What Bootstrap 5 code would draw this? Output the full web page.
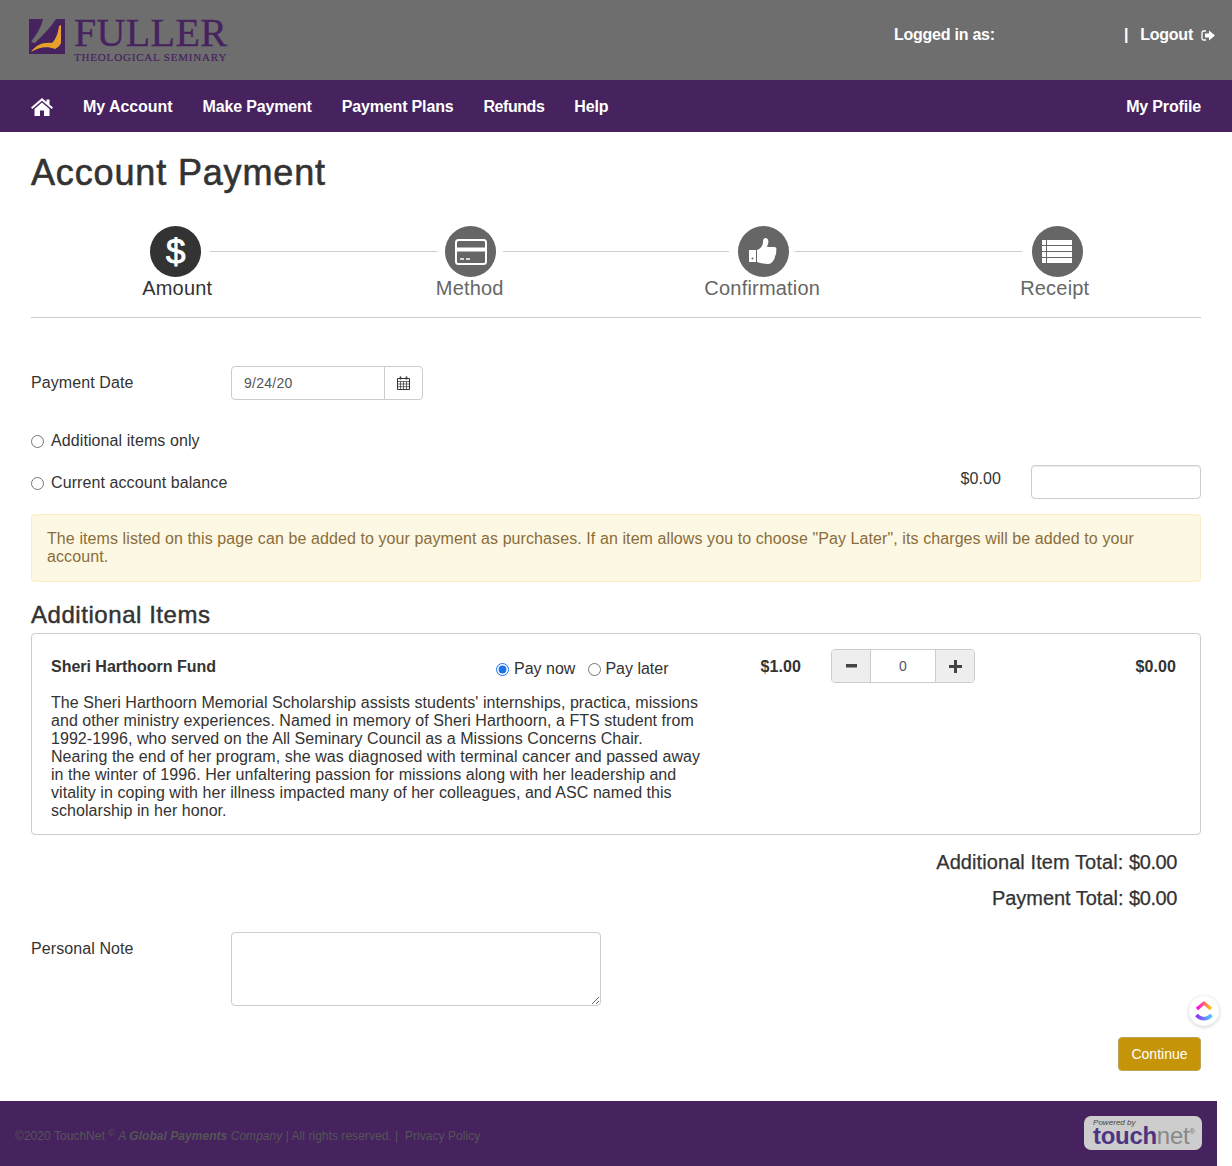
<!DOCTYPE html>
<html lang="en"><head><meta charset="utf-8"><title>Account Payment</title>
<link rel="stylesheet" href="https://cdn.jsdelivr.net/npm/bootstrap@5.3.0/dist/css/bootstrap.min.css">
<style>
html,body{height:1166px;overflow:hidden}
body{font-family:"Liberation Sans",Arial,sans-serif;font-size:16px;line-height:18px;letter-spacing:.09px;color:#333;background:#fff;position:relative}
.top-bar{height:80px;background:#6e6e6e;padding:0 17px 0 29px}
.logo-mark{width:36px;height:35px;margin-top:19px}
.logo-words{margin-left:9px;margin-top:14px;color:#46235f;font-family:"Liberation Serif",serif;letter-spacing:0}
.logo-big{font-size:40px;line-height:37px;letter-spacing:.35px;white-space:nowrap;-webkit-text-stroke:.3px #46235f}
.logo-small{font-size:11px;line-height:11px;letter-spacing:.82px;white-space:nowrap;margin-top:1px;-webkit-text-stroke:.2px #46235f}
.top-links{color:#fff;font-weight:700;padding-top:26px;letter-spacing:-.24px}
.who{width:230px}
.main-nav{height:52px;background:#46235f;padding:1px 31px 0}
.main-nav a{color:#fff;font-weight:700;text-decoration:none;letter-spacing:-.16px;white-space:nowrap}
.nav-items{gap:30px}
.main-nav a.nav-wide{letter-spacing:-.06px}
.main-nav a.nav-tight{letter-spacing:-.45px}
.page-wrap{padding:0 31px}
.page-title{font-size:36px;line-height:40px;font-weight:500;color:#333;margin:21px 0 0;padding:0;letter-spacing:.85px;-webkit-text-stroke:.6px #333}
.steps{margin-top:33px;padding-bottom:18px;border-bottom:1px solid #ccc;display:grid;grid-template-columns:repeat(4,1fr)}
.step-cell{text-align:center;position:relative;color:#666;font-size:20px;line-height:22px;letter-spacing:.2px}
.step-cell.on{color:#333}
.step-cell:not(:last-child)::after{content:"";position:absolute;top:25px;left:calc(50% + 33px);width:calc(100% - 66px);height:1px;background:#ccc}
.step-dot{width:51px;height:51px;border-radius:50%;background:#666;display:flex;align-items:center;justify-content:center;margin:0 auto;transform:translateX(1px)}
.on .step-dot{background:#333;margin-left:calc(50% - 28px)}
.step-last .step-dot{margin-left:calc(50% - 24px)}
.dollar{color:#fff;font-size:35px;font-weight:400;line-height:1;-webkit-text-stroke:.9px #fff;letter-spacing:0}
.field-label{width:200px;flex:none}
.date-row{margin-top:48px;height:34px}
.date-group{width:192px}
.date-group .form-control{height:34px;font-size:14px;color:#555;padding:6px 12px;border-color:#ccc;border-radius:4px 0 0 4px;font-family:inherit;letter-spacing:.25px}
.date-group .input-group-text{background:#fff;border-color:#ccc;width:39px;padding:0;justify-content:center;border-radius:0 4px 4px 0}
.radio-line{display:flex;align-items:center;gap:7px;margin:0}
.round-input{appearance:auto;width:13px;height:13px;margin:0;flex:none;accent-color:#1a73e8}
.only-row{margin-top:32px}
.bal-row{margin-top:15px;height:36px;align-items:flex-start}
.bal-row .radio-line{margin-top:9px}
.bal-amt{margin-left:auto;margin-top:5px;margin-right:30px}
.bal-input{width:170px;height:34px;border:1px solid #ccc;border-radius:4px;box-shadow:inset 0 1px 1px rgba(0,0,0,.075)}
.note-alert{margin:13px 0 0;padding:15px;height:68px;background:#fcf8e3;border:1px solid #faebcc;border-radius:4px;color:#8a6d3b;line-height:18px}
.sec-title{font-size:24px;line-height:26px;font-weight:500;margin:20px 0 5px;color:#333;letter-spacing:.55px;-webkit-text-stroke:.45px #333}
.item-box{height:202px;border:1px solid #ccc;border-radius:4px;padding:15px 24px 0 19px}
.item-head{height:36px;font-size:16px}
.item-name{width:445px;font-weight:700;padding-top:9px;letter-spacing:-.02px}
.pay-choice{width:264px;padding-top:8px;gap:13px;align-items:flex-start;letter-spacing:0}
.pay-choice .radio-line{gap:5px;height:24px}
.pay-choice .radio-line + .radio-line{gap:4px}
.item-price{width:41px;font-weight:700;padding-top:9px;text-align:right;margin-right:0}
.qty-group{width:144px;height:34px;margin-left:30px;border:1px solid #ccc;border-radius:4px;overflow:hidden}
.qty-btn{width:38px;background:#eee;display:flex;align-items:center;justify-content:center;flex:none}
.qty-val{flex:1;border-left:1px solid #ccc;border-right:1px solid #ccc;text-align:center;font-size:14px;line-height:32px;color:#555}
.item-sum{margin-left:auto;font-weight:700;padding-top:9px}
.item-desc{width:654px;margin:9px 0 0;letter-spacing:.05px}
.sum-line{text-align:right;font-size:20px;line-height:24px;font-weight:500;padding-right:24px;margin:0;letter-spacing:.08px;-webkit-text-stroke:.25px #333}
.sum-line span{letter-spacing:-.4px}
.sum-a{margin-top:15px}
.sum-b{margin-top:12px;letter-spacing:-.03px}
.note-row{margin-top:22px}
.note-row .field-label{padding-top:8px}
.note-area{width:370px;height:74px;border:1px solid #ccc;border-radius:4px}
.go-row{margin-top:31px}
.go-btn{background:#c69408;border:1px solid #bda35c;color:#fff;font-size:14px;line-height:20px;padding:6px 0;border-radius:4px;width:83px;height:34px}
.foot-bar{position:absolute;left:0;top:1101px;width:1217px;height:65px;background:#46235f;padding:0 15px;color:#555;font-size:12px;letter-spacing:.04px}
.foot-bar a{color:#555;text-decoration:none}
.foot-bar sup{font-size:9px}
.foot-text{padding-top:26px}
.tn-badge{width:118px;height:34px;margin-top:15px;background:#cdcdcd;border-radius:7px;padding:3px 9px;line-height:1}
.tn-pow{font-size:8px;font-style:italic;color:#444;line-height:8px}
.tn-word{font-size:24px;line-height:20px;font-weight:700;color:#4e3582;letter-spacing:-.3px;margin-top:-1px;white-space:nowrap}
.tn-word span{font-weight:400;color:#888}
.tn-word sup{font-size:8px;font-weight:400;color:#777;top:-1.2em;vertical-align:baseline;position:relative}
.clk-float{position:absolute;left:1189px;top:996px;width:30px;height:30px;border-radius:50%;background:#fff;box-shadow:0 1px 4px rgba(0,0,0,.2);display:flex;align-items:center;justify-content:center}
</style></head>
<body>
<header class="top-bar d-flex justify-content-between">
  <div class="d-flex">
    <svg class="logo-mark" viewBox="0 0 36 35" aria-hidden="true"><path d="M0 0H36V35H0Z" fill="#46235f"/><path d="M14 0H27C22 8 14 16 6 24L2 23C7 16 12 9 14 0Z" fill="#6e6e6e"/><path d="M2 33C7 26 14 23 23 24C27 20 29 14 30 7L32 6V24C31 27 28 29 26 30C18 27 10 28 2 33Z" fill="#e6a02c"/></svg>
    <div class="logo-words"><div class="logo-big">FULLER</div><div class="logo-small">THEOLOGICAL SEMINARY</div></div>
  </div>
  <div class="top-links d-flex">
    <div class="who">Logged in as:</div>
    <div class="d-flex align-items-start"><span>|</span><span class="ms-2 ps-1">Logout</span>
      <svg class="ms-2 mt-1" width="14" height="11" viewBox="0 0 14 11" aria-hidden="true"><path d="M5 1H2.500A1.500 1.500 0 0 0 1 2.500V8.500A1.500 1.500 0 0 0 2.500 10H5" fill="none" stroke="#fff" stroke-width="1.300"/><path d="M8 0.500L14 5.500L8 10.500V7.500H4V3.500H8Z" fill="#fff"/></svg>
    </div>
  </div>
</header>
<nav class="main-nav d-flex align-items-center justify-content-between">
  <div class="d-flex align-items-center nav-items">
    <a href="#" aria-label="Home"><svg class="d-block" width="22" height="18" viewBox="0 0 22 18"><path d="M11 0L0 9.500L1.300 11L11 2.800L20.700 11L22 9.500L18.500 6.500V1.500H15.500V3.900Z" fill="#fff"/><path d="M3.500 11L11 4.600L18.500 11V18H13V12.500H9V18H3.500Z" fill="#fff"/></svg></a>
    <a href="#" class="nav-wide">My Account</a><a href="#">Make Payment</a><a href="#">Payment Plans</a><a href="#" class="nav-tight">Refunds</a><a href="#">Help</a>
  </div>
  <a href="#">My Profile</a>
</nav>
<main class="page-wrap">
  <h1 class="page-title">Account Payment</h1>
  <div class="steps">
    <div class="step-cell on"><div class="step-dot"><span class="dollar">$</span></div>Amount</div>
    <div class="step-cell"><div class="step-dot"><svg width="32" height="26" viewBox="0 0 32 26"><rect x="1" y="1" width="30" height="24" rx="2.500" fill="none" stroke="#fff" stroke-width="2"/><path d="M1 8.500H31V12.500H1Z" fill="#fff"/><path d="M5 20H9M11 20H15" stroke="#fff" stroke-width="1.500"/></svg></div>Method</div>
    <div class="step-cell"><div class="step-dot"><svg width="28" height="27" viewBox="0 0 28 27"><path d="M0 12H7V24H0Z" fill="#fff"/><circle cx="3.500" cy="20.500" r="1" fill="#666"/><path d="M8 12C11 11 14 8 14 4C14 1 15 0 16.500 0C19 0 20 3 19 6L18 9H25C27.500 9 28 11 27 13C27.500 15 27 17 26 18C26 20 25 22 24 23C23 25 21 26 19 26C15 26 11 25 8 24Z" fill="#fff"/></svg></div>Confirmation</div>
    <div class="step-cell step-last"><div class="step-dot"><svg width="30" height="24" viewBox="0 0 30 24"><g fill="#fff"><rect width="4" height="5"/><rect x="5" width="25" height="5"/><rect y="6" width="4" height="5"/><rect x="5" y="6" width="25" height="5"/><rect y="12" width="4" height="5"/><rect x="5" y="12" width="25" height="5"/><rect y="18" width="4" height="5"/><rect x="5" y="18" width="25" height="5"/></g></svg></div>Receipt</div>
  </div>
  <div class="d-flex align-items-center date-row">
    <label class="field-label" for="pdate">Payment Date</label>
    <div class="input-group date-group"><input id="pdate" class="form-control" value="9/24/20">
      <span class="input-group-text"><svg width="13" height="14" viewBox="0 0 13 14"><path d="M.5 2.500H12.500V13.500H.5Z" fill="none" stroke="#333"/><path d="M1 5.500H12M1 8H12M1 10.700H12M3.500 5.500V13M6.500 5.500V13M9.500 5.500V13" fill="none" stroke="#333" stroke-width=".7"/><path d="M3.500 .5V3.500M9.500 .5V3.500" stroke="#333" stroke-width="1.600"/></svg></span>
    </div>
  </div>
  <label class="radio-line only-row"><input class="round-input" type="radio" name="bal">Additional items only</label>
  <div class="d-flex bal-row">
    <label class="radio-line"><input class="round-input" type="radio" name="bal">Current account balance</label>
    <span class="bal-amt">$0.00</span>
    <div class="bal-input"></div>
  </div>
  <div class="note-alert">The items listed on this page can be added to your payment as purchases. If an item allows you to choose "Pay Later", its charges will be added to your account.</div>
  <h2 class="sec-title">Additional Items</h2>
  <div class="item-box">
    <div class="d-flex item-head">
      <div class="item-name">Sheri Harthoorn Fund</div>
      <div class="d-flex pay-choice">
        <label class="radio-line"><input class="round-input" type="radio" name="pay" checked>Pay now</label>
        <label class="radio-line"><input class="round-input" type="radio" name="pay">Pay later</label>
      </div>
      <div class="item-price">$1.00</div>
      <div class="d-flex qty-group">
        <div class="qty-btn"><svg width="11" height="4" viewBox="0 0 11 4"><rect width="11" height="3.500" fill="#444"/></svg></div>
        <div class="qty-val">0</div>
        <div class="qty-btn"><svg width="13" height="13" viewBox="0 0 13 13"><path d="M5 0H8V5H13V8H8V13H5V8H0V5H5Z" fill="#444"/></svg></div>
      </div>
      <div class="item-sum">$0.00</div>
    </div>
    <p class="item-desc">The Sheri Harthoorn Memorial Scholarship assists students' internships, practica, missions and other ministry experiences. Named in memory of Sheri Harthoorn, a FTS student from 1992-1996, who served on the All Seminary Council as a Missions Concerns Chair.<br>Nearing the end of her program, she was diagnosed with terminal cancer and passed away in the winter of 1996. Her unfaltering passion for missions along with her leadership and vitality in coping with her illness impacted many of her colleagues, and ASC named this scholarship in her honor.</p>
  </div>
  <p class="sum-line sum-a">Additional Item Total: <span>$0.00</span></p>
  <p class="sum-line sum-b">Payment Total: <span>$0.00</span></p>
  <div class="d-flex note-row">
    <label class="field-label" for="pnote">Personal Note</label>
    <textarea id="pnote" class="note-area"></textarea>
  </div>
  <div class="d-flex justify-content-end go-row"><button class="go-btn" type="button">Continue</button></div>
</main>
<div class="clk-float"><svg width="18" height="22" viewBox="0 0 18 22" aria-hidden="true"><defs><linearGradient id="cu1" x1="0" x2="1"><stop offset="0" stop-color="#ff02f0"/><stop offset="1" stop-color="#ffc800"/></linearGradient><linearGradient id="cu2" x1="0" x2="1"><stop offset="0" stop-color="#8930fd"/><stop offset="1" stop-color="#49ccf9"/></linearGradient></defs><path d="M2 9L9 3L16 9" fill="none" stroke="url(#cu1)" stroke-width="3.400" stroke-linejoin="round"/><path d="M1.500 15C6 20 12 20 16.500 15" fill="none" stroke="url(#cu2)" stroke-width="3.400"/></svg></div>
<footer class="foot-bar d-flex justify-content-between">
  <div class="foot-text">©2020 TouchNet <sup>©</sup> <i>A <b>Global Payments</b> Company</i> | All rights reserved. | &nbsp;<a href="#">Privacy Policy</a></div>
  <div class="tn-badge"><div class="tn-pow">Powered by</div><div class="tn-word">touch<span>net</span><sup>®</sup></div></div>
</footer>
</body></html>
